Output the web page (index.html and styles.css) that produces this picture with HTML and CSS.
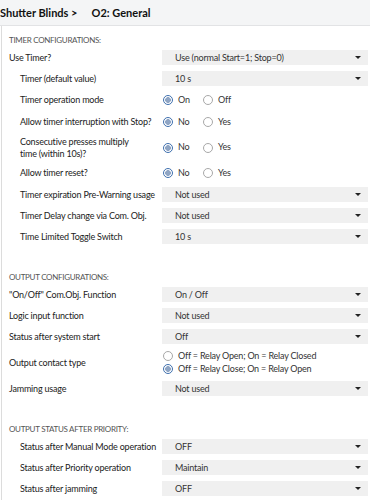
FILE: index.html
```html
<!DOCTYPE html>
<html lang="en">
<head>
    <meta charset="UTF-8">
    <meta name="viewport" content="width=device-width, initial-scale=1.0">
    <title>O2: General</title>
    <link rel="stylesheet" href="styles.css">
</head>
<body>
    <div class="crumbs">
        <span class="crumb">Shutter Blinds &gt;</span>
        <span class="crumb">O2: General</span>
    </div>

    <div class="panel">
        <!-- timer -->
        <section class="group">
            <h2 class="group-title">Timer configurations:</h2>
            <div class="rows">
                <div class="row">
                    <span class="label">Use Timer?</span>
                    <div class="select">Use (normal Start=1; Stop=0)</div>
                </div>
                <div class="row sub">
                    <span class="label">Timer (default value)</span>
                    <div class="select">10 s</div>
                </div>
                <div class="row sub">
                    <span class="label">Timer operation mode</span>
                    <div class="radios">
                        <span class="opt"><i class="dot on"></i>On</span>
                        <span class="opt"><i class="dot"></i>Off</span>
                    </div>
                </div>
                <div class="row sub">
                    <span class="label">Allow timer interruption with Stop?</span>
                    <div class="radios">
                        <span class="opt"><i class="dot on"></i>No</span>
                        <span class="opt"><i class="dot"></i>Yes</span>
                    </div>
                </div>
                <div class="row sub">
                    <span class="label">Consecutive presses multiply<br>time (within 10s)?</span>
                    <div class="radios">
                        <span class="opt"><i class="dot on"></i>No</span>
                        <span class="opt"><i class="dot"></i>Yes</span>
                    </div>
                </div>
                <div class="row sub">
                    <span class="label">Allow timer reset?</span>
                    <div class="radios">
                        <span class="opt"><i class="dot on"></i>No</span>
                        <span class="opt"><i class="dot"></i>Yes</span>
                    </div>
                </div>
                <div class="row sub">
                    <span class="label">Timer expiration Pre-Warning usage</span>
                    <div class="select">Not used</div>
                </div>
                <div class="row sub">
                    <span class="label">Timer Delay change via Com. Obj.</span>
                    <div class="select">Not used</div>
                </div>
                <div class="row sub">
                    <span class="label">Time Limited Toggle Switch</span>
                    <div class="select">10 s</div>
                </div>
            </div>
        </section>

        <!-- output -->
        <section class="group">
            <h2 class="group-title">Output configurations:</h2>
            <div class="rows">
                <div class="row">
                    <span class="label">"On/Off" Com.Obj. Function</span>
                    <div class="select">On / Off</div>
                </div>
                <div class="row">
                    <span class="label">Logic input function</span>
                    <div class="select">Not used</div>
                </div>
                <div class="row">
                    <span class="label">Status after system start</span>
                    <div class="select">Off</div>
                </div>
                <div class="row">
                    <span class="label">Output contact type</span>
                    <div class="radios stack">
                        <span class="opt"><i class="dot"></i>Off = Relay Open; On = Relay Closed</span>
                        <span class="opt"><i class="dot on"></i>Off = Relay Close; On = Relay Open</span>
                    </div>
                </div>
                <div class="row">
                    <span class="label">Jamming usage</span>
                    <div class="select">Not used</div>
                </div>
            </div>
        </section>

        <!-- priority -->
        <section class="group">
            <h2 class="group-title">Output status after priority:</h2>
            <div class="rows">
                <div class="row sub">
                    <span class="label">Status after Manual Mode operation</span>
                    <div class="select">OFF</div>
                </div>
                <div class="row sub">
                    <span class="label">Status after Priority operation</span>
                    <div class="select">Maintain</div>
                </div>
                <div class="row sub">
                    <span class="label">Status after jamming</span>
                    <div class="select">OFF</div>
                </div>
            </div>
        </section>
    </div>
</body>
</html>
```

FILE: styles.css
```css
body {
    margin: 0;
    font-family: Lato, "Liberation Sans", sans-serif;
    color: #222;
    background-color: #fff;
}
.crumbs {
    height: 25px;
    display: flex;
    align-items: center;
    gap: 14px;
    background-color: #f4f5f6;
    border-bottom: 1px solid #e2e3e5;
    font-size: 11px;
    font-weight: bold;
    color: #111;
}
.panel {
    margin-left: 1px;
    border-left: 1px solid #dcdcdc;
    padding: 8px 2px 20px 7px;
}
.group + .group {
    margin-top: 27px;
}
.group-title {
    margin: 0 0 4px;
    font-size: 8px;
    font-weight: normal;
    line-height: 12px;
    letter-spacing: -0.3px;
    text-transform: uppercase;
    color: #555;
}
.rows {
    display: flex;
    flex-direction: column;
    gap: 6px;
}
.row {
    display: grid;
    grid-template-columns: 153px 1fr;
    align-items: center;
    min-height: 15px;
    font-size: 9px;
    letter-spacing: -0.2px;
}
.row.sub .label {
    padding-left: 11px;
}
.label {
    line-height: 11.5px;
    white-space: nowrap;
}
.select {
    height: 14.5px;
    display: flex;
    align-items: center;
    justify-content: space-between;
    padding: 0 7px 0 13px;
    background-color: #f0f0f0;
    color: #333;
}
.select::after {
    content: "";
    border-left: 3px solid transparent;
    border-right: 3px solid transparent;
    border-top: 3px solid #222;
}
.radios {
    min-height: 16px;
    display: flex;
    align-items: center;
    padding-left: 1px;
    color: #333;
}
.radios.stack {
    flex-direction: column;
    align-items: flex-start;
    justify-content: center;
}
.opt {
    width: 40px;
    display: flex;
    align-items: center;
    gap: 5px;
    line-height: 14.5px;
    white-space: nowrap;
}
.stack .opt {
    width: auto;
    line-height: 12.5px;
}
.dot {
    flex-shrink: 0;
    width: 10px;
    height: 10px;
    box-sizing: border-box;
    border: 1px solid #a8a8a8;
    border-radius: 50%;
    background-color: #fff;
}
.dot.on {
    border-color: #3e6fae;
    background: radial-gradient(circle, #8fa5c4 0 2.6px, #fff 3.1px);
}
```
